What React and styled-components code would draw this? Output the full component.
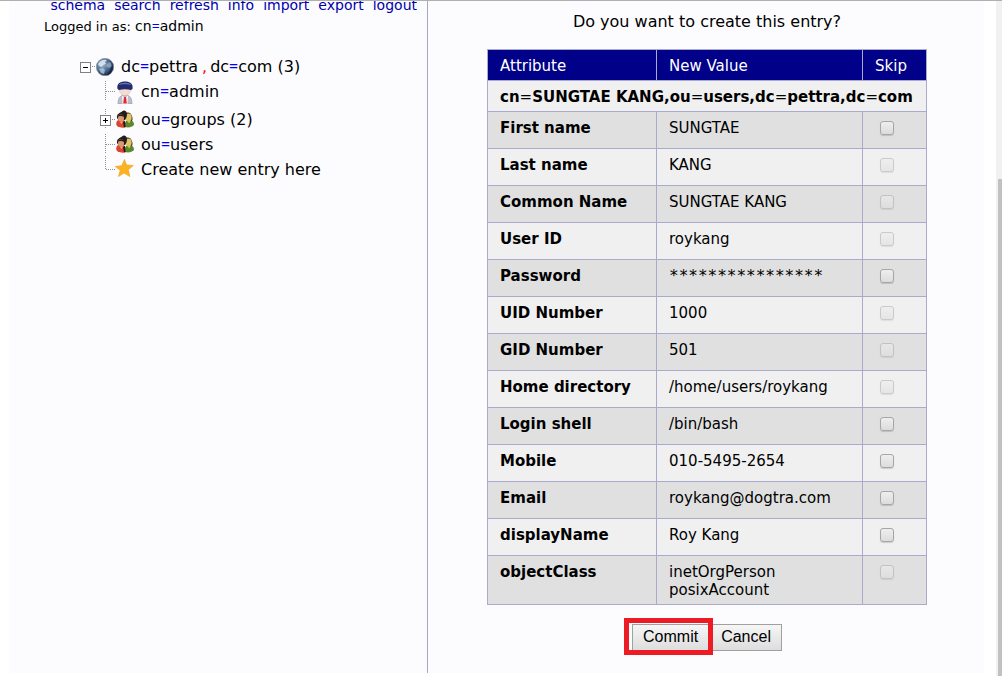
import React from "react";
import styled, { createGlobalStyle, css } from "styled-components";

const GlobalStyle = createGlobalStyle`
  *, *::before, *::after { box-sizing: border-box; }
  body {
    margin: 0;
    background: #fff;
    color: #000;
    font-family: Verdana, "DejaVu Sans", sans-serif;
    font-size: 16px;
  }
`;

const Window = styled.div`
  display: flex;
  min-height: 100vh;
  border-top: 1px solid #b0b0b0;
  overflow: hidden;
`;

const Page = styled.div`
  flex: 1;
  display: flex;
  align-self: flex-start;
  margin: 0 12px 0 9px;
  background: #fcfcff;
`;

const ScrollTrack = styled.div`
  display: flex;
  width: 6px;
  padding: 178px 0 0 2px;
  background: #f1f1f1;
`;

const ScrollThumb = styled.div`
  flex: 1;
  background: #c1c1c1;
`;

const Sidebar = styled.aside`
  flex: 0 0 419px;
  border-right: 1px solid #a9a9bd;
`;

const Menu = styled.nav`
  display: flex;
  justify-content: flex-end;
  gap: 9px;
  margin-top: -6px;
  padding-right: 10px;
  font-size: 14px;
  line-height: 20px;
`;

const MenuLink = styled.a`
  color: #0000aa;
  text-decoration: none;
`;

const LoginLine = styled.div`
  padding: 1px 0 0 35px;
  font-size: 13px;
  line-height: 20px;
  white-space: pre;
`;

const LoginName = styled.span`
  font-size: 14px;
`;

const Equals = styled.span`
  color: #0000ff;
  font-family: "Noto Sans", sans-serif;
  line-height: 1;
`;

const Comma = styled.span`
  margin: 0 3px 0 4px;
  color: #ff0000;
`;

const Tree = styled.ul`
  list-style: none;
  margin: 0;
  padding: ${(p) => (p.$nested ? "0 0 0 20px" : "17px 0 0 69px")};
`;

const TreeItem = styled.div`
  display: flex;
  align-items: center;
  height: 25px;
  margin-top: ${(p) => (p.$spaced ? 3 : 0)}px;
`;

const TreeLink = styled.a`
  margin-left: 7px;
  color: #000;
  text-decoration: none;
  white-space: nowrap;
`;

const Main = styled.main`
  flex: 1;
  display: flex;
  flex-direction: column;
  align-items: center;
  padding: 11px 0 22px 2px;
`;

const Question = styled.p`
  margin: 0;
  line-height: 20px;
`;

const EntryTable = styled.table`
  width: 440px;
  margin-top: 17px;
  border-collapse: collapse;
  table-layout: fixed;
  font-size: 15px;
  line-height: 18px;
`;

const cell = css`
  padding: 7px 12px 5px;
  border: 1px solid #aaaacc;
  text-align: left;
  vertical-align: top;
`;

const HeadCell = styled.th`
  ${cell}
  width: ${(p) => p.$width}px;
  background: #000088;
  color: #fff;
  font-weight: 400;
`;

const DnCell = styled.th`
  ${cell}
  background: #f0f0f0;
  white-space: nowrap;
`;

const Light = styled.span`
  font-weight: 400;
`;

const Row = styled.tr`
  height: 37px;
  background: #f0f0f0;

  &:nth-child(odd) {
    background: #e0e0e0;
  }
`;

const NameCell = styled.th`
  ${cell}
`;

const ValueCell = styled.td`
  ${cell}
`;

const Masked = styled.span`
  font-family: "DejaVu Sans Mono", monospace;
  font-size: 16px;
`;

const SkipCell = styled.td`
  ${cell}
  padding: 9px 17px 5px;
`;

const SkipBox = styled.input`
  appearance: none;
  display: block;
  width: 14px;
  height: 14px;
  margin: 0;
  border: 1px solid #a6a6a6;
  border-radius: 3px;
  background: linear-gradient(#eeeeee, #dcdcdc);
  box-shadow: 0 1px 1px rgba(0, 0, 0, 0.15);

  &:disabled {
    opacity: 0.5;
  }
`;

const Buttons = styled.div`
  display: flex;
  gap: 1px;
  margin-top: 19px;
`;

const Button = styled.button`
  height: 27px;
  padding: 0 10px 2px;
  border: 1px solid #a0a0a0;
  border-radius: 0;
  background: linear-gradient(#f6f6f6, #dddddd);
  color: #000;
  font: 16px/18px Arial, "Liberation Sans", sans-serif;
`;

const Highlight = styled.div`
  position: relative;
  z-index: 1;
  display: flex;

  &::after {
    content: "";
    position: absolute;
    inset: -6px -4px -4px -8px;
    border: 5px solid #ed1c24;
    pointer-events: none;
  }
`;

const Branch = ({ width = 18, toggle, vertical, last }) => (
  <svg width={width} height="25" viewBox={`0 0 ${width} 25`} overflow="visible" aria-hidden="true" shapeRendering="crispEdges">
    <g stroke="#909090" strokeDasharray="1 1" fill="none">
      {vertical && <path d={last ? "M7.5 -1V12" : "M7.5 2V22"} />}
      <path d={`M8 12.5H${width}`} />
    </g>
    {toggle && (
      <g>
        <rect x="2.5" y="8.5" width="10" height="10" fill="#fff" stroke="#808080" />
        <path d="M5 13H10V14H5z" />
        {toggle === "plus" && <path d="M7 11H8V16H7z" />}
      </g>
    )}
  </svg>
);

const Globe = () => (
  <svg width="18" height="18" viewBox="0 0 18 18" aria-hidden="true">
    <defs>
      <radialGradient id="sea" cx="0.35" cy="0.35" r="0.7">
        <stop offset="0" stopColor="#9db8d0" />
        <stop offset="0.55" stopColor="#4d6f94" />
        <stop offset="1" stopColor="#15253f" />
      </radialGradient>
    </defs>
    <circle cx="9" cy="9" r="8.7" fill="url(#sea)" stroke="#8b8f96" strokeWidth="0.6" />
    <path d="M2 6C4 2 8 1 11 2L9 4 10 6 7 7 6 9 3 8z" fill="#e2eaf0" opacity="0.85" />
    <path d="M3 11L7 10 9 12 8 16 5 15z" fill="#c5d4e0" opacity="0.7" />
    <path d="M11 6L14 4 16 8 13 10 10 8z" fill="#9fb4c8" opacity="0.7" />
    <path d="M16 6A8 8 0 0 1 10 17.3C13 15 15.5 11 16 6z" fill="#0a1931" opacity="0.55" />
  </svg>
);

const Person = () => (
  <svg width="18" height="24" viewBox="0 0 18 24" aria-hidden="true">
    <path d="M2 24C2 18 4 15 9 15s7 3 7 9z" fill="#bcbecb" stroke="#9a9cb0" strokeWidth="0.7" />
    <path d="M6 15.5L9 18 12 15.5 11.5 24H6.500z" fill="#f5f5fa" />
    <path d="M8 17H10L10.800 23.500H7.200z" fill="#e8282c" />
    <path d="M3 7H15C15.500 12.500 12 15.500 9 15.500S2.500 12.500 3 7z" fill="#f5dcd2" stroke="#d9b3a5" strokeWidth="0.6" />
    <path d="M1.500 9C.5 3.500 4 1.500 9 1.500S17.500 3.500 16.500 9L15 10C11 9 7 9 3 10z" fill="#232d6e" />
    <path d="M2.500 5C5 2 13 2 15.500 5 12 4 6 4 2.500 5z" fill="#6673b4" />
  </svg>
);

const Group = () => (
  <svg width="18" height="18" viewBox="0 0 18 18" overflow="visible" aria-hidden="true">
    <g transform="translate(0 -1)">
      <path d="M9 17C8.500 12 10 10 13 10s5 1.500 5 5C16 17 13 18 9 17z" fill="#5b8a2c" />
      <path d="M.3 15C0 11 1.500 9.500 5 9.500S9.700 12 9.500 17.500C6 18 2 17.500 .3 15z" fill="#d9452d" />
      <path d="M9 4C11 1.500 14.500 2 15.500 5 16.500 7 17 9 16 11L10 10z" fill="#37331a" />
      <ellipse cx="12.500" cy="7.500" rx="3.200" ry="4" fill="#dfc468" />
      <path d="M1 8C.5 3.500 4 3 6 1.500 8 -.5 11 1 11 4 11 7 10 8 9 10L2 9.500z" fill="#241c1a" />
      <ellipse cx="5" cy="8" rx="3" ry="3.800" fill="#d99a78" />
      <path d="M2 6.500C3 3.500 8 3.500 8.500 7 6 6 4 5.500 2 6.500z" fill="#2b1b16" />
      <path d="M7 12.500L9 10.500 9.500 17H8z" fill="#211b17" />
      <path d="M4 12L5.500 14 7 11.500z" fill="#eab293" />
      <path d="M12 11.500L13 13.500 14.500 11z" fill="#e5cd7c" />
    </g>
  </svg>
);

const Star = () => (
  <svg width="18" height="18" viewBox="0 0 18 18" overflow="visible" aria-hidden="true">
    <path transform="translate(-1 -2)" d="M9.500 .5L11.500 6 18.300 6.500 13.300 10.800 14.800 17.500 9 14 3.500 17.500 5.200 11.300 .3 7.500 6.700 6.700z" fill="#fbb321" stroke="#f3a51c" strokeWidth="0.7" strokeLinejoin="round" />
  </svg>
);

const Pair = ({ name, value }) => (
  <>
    {name}
    <Equals>=</Equals>
    {value}
  </>
);

const menuItems = ["schema", "search", "refresh", "info", "import", "export", "logout"];

const rows = [
  { name: "First name", value: "SUNGTAE", optional: true },
  { name: "Last name", value: "KANG" },
  { name: "Common Name", value: "SUNGTAE KANG" },
  { name: "User ID", value: "roykang" },
  { name: "Password", value: "****************", optional: true, masked: true },
  { name: "UID Number", value: "1000" },
  { name: "GID Number", value: "501" },
  { name: "Home directory", value: "/home/users/roykang" },
  { name: "Login shell", value: "/bin/bash", optional: true },
  { name: "Mobile", value: "010-5495-2654", optional: true },
  { name: "Email", value: "roykang@dogtra.com", optional: true },
  { name: "displayName", value: "Roy Kang", optional: true },
  { name: "objectClass", value: ["inetOrgPerson", "posixAccount"] },
];

export default function App() {
  return (
    <>
      <GlobalStyle />
      <Window>
        <Page>
          <Sidebar>
            <Menu>
              {menuItems.map((item) => (
                <MenuLink key={item} href={`#${item}`}>{item}</MenuLink>
              ))}
            </Menu>
            <LoginLine>
              Logged in as: <LoginName><Pair name="cn" value="admin" /></LoginName>
            </LoginLine>
            <Tree>
              <li>
                <TreeItem>
                  <Branch toggle="minus" />
                  <Globe />
                  <TreeLink href="#base">
                    <Pair name="dc" value="pettra" />
                    <Comma>,</Comma>
                    <Pair name="dc" value="com" /> (3)
                  </TreeLink>
                </TreeItem>
                <Tree $nested>
                  <li>
                    <TreeItem>
                      <Branch vertical />
                      <Person />
                      <TreeLink href="#admin"><Pair name="cn" value="admin" /></TreeLink>
                    </TreeItem>
                  </li>
                  <li>
                    <TreeItem $spaced>
                      <Branch vertical toggle="plus" />
                      <Group />
                      <TreeLink href="#groups"><Pair name="ou" value="groups" /> (2)</TreeLink>
                    </TreeItem>
                  </li>
                  <li>
                    <TreeItem>
                      <Branch vertical />
                      <Group />
                      <TreeLink href="#users"><Pair name="ou" value="users" /></TreeLink>
                    </TreeItem>
                  </li>
                  <li>
                    <TreeItem>
                      <Branch vertical last />
                      <Star />
                      <TreeLink href="#create">Create new entry here</TreeLink>
                    </TreeItem>
                  </li>
                </Tree>
              </li>
            </Tree>
          </Sidebar>
          <Main>
            <Question>Do you want to create this entry?</Question>
            <EntryTable>
              <thead>
                <tr>
                  <HeadCell $width={169} scope="col">Attribute</HeadCell>
                  <HeadCell $width={206} scope="col">New Value</HeadCell>
                  <HeadCell $width={64} scope="col">Skip</HeadCell>
                </tr>
                <tr>
                  <DnCell colSpan={3}>
                    cn<Light>=</Light>SUNGTAE KANG,ou<Light>=</Light>users,dc<Light>=</Light>pettra,dc<Light>=</Light>com
                  </DnCell>
                </tr>
              </thead>
              <tbody>
                {rows.map(({ name, value, optional, masked }) => (
                  <Row key={name}>
                    <NameCell scope="row">{name}</NameCell>
                    <ValueCell>
                      {masked ? (
                        <Masked>{value}</Masked>
                      ) : (
                        [].concat(value).map((line) => <div key={line}>{line}</div>)
                      )}
                    </ValueCell>
                    <SkipCell>
                      <SkipBox type="checkbox" aria-label={`Skip ${name}`} disabled={!optional} />
                    </SkipCell>
                  </Row>
                ))}
              </tbody>
            </EntryTable>
            <Buttons>
              <Highlight>
                <Button type="submit">Commit</Button>
              </Highlight>
              <Button type="button">Cancel</Button>
            </Buttons>
          </Main>
        </Page>
        <ScrollTrack>
          <ScrollThumb />
        </ScrollTrack>
      </Window>
    </>
  );
}
